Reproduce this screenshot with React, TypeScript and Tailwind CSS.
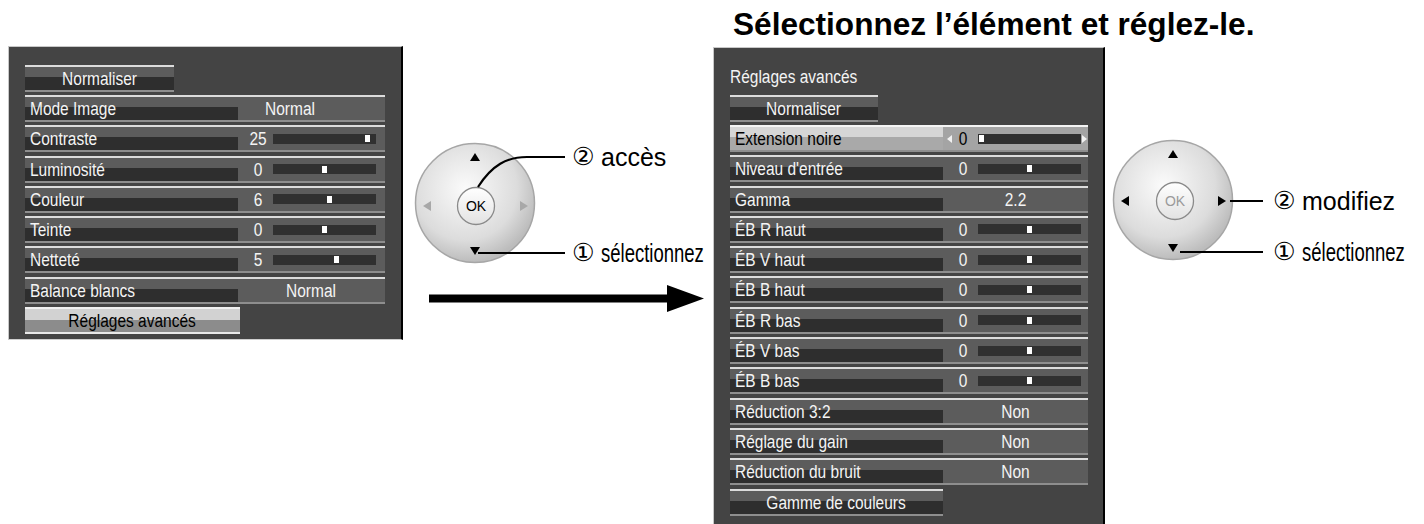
const darkBg =
  "bg-[linear-gradient(to_bottom,#5c5c5c_0%,#5c5c5c_42%,#2e2e2e_42%,#2e2e2e_100%)]";
const lightBg =
  "bg-[linear-gradient(to_bottom,#d6d6d6_0%,#d6d6d6_45%,#a9a9a9_45%,#a9a9a9_100%)]";
const btnLightBg =
  "bg-[linear-gradient(to_bottom,#d2d2d2_0%,#d2d2d2_48%,#8c8c8c_48%,#8c8c8c_100%)]";

type RowData = {
  label: string;
  value: string;
  knob?: number;
  box?: string;
  active?: boolean;
};

const leftRows: RowData[] = [
  { label: "Mode Image", value: "Normal", box: "w-[104px]" },
  { label: "Contraste", value: "25", knob: 92 },
  { label: "Luminosité", value: "0", knob: 49 },
  { label: "Couleur", value: "6", knob: 54 },
  { label: "Teinte", value: "0", knob: 49 },
  { label: "Netteté", value: "5", knob: 61 },
  { label: "Balance blancs", value: "Normal", box: "w-full" },
];

const rightRows: RowData[] = [
  { label: "Extension noire", value: "0", knob: 1, active: true },
  { label: "Niveau d'entrée", value: "0", knob: 49 },
  { label: "Gamma", value: "2.2", box: "w-full" },
  { label: "ÉB R haut", value: "0", knob: 49 },
  { label: "ÉB V haut", value: "0", knob: 49 },
  { label: "ÉB B haut", value: "0", knob: 49 },
  { label: "ÉB R bas", value: "0", knob: 49 },
  { label: "ÉB V bas", value: "0", knob: 49 },
  { label: "ÉB B bas", value: "0", knob: 49 },
  { label: "Réduction 3:2", value: "Non", box: "w-full" },
  { label: "Réglage du gain", value: "Non", box: "w-full" },
  { label: "Réduction du bruit", value: "Non", box: "w-full" },
];

// the OSD font is a narrow sans; squeeze Liberation Sans to match
function Narrow({ children, left }: { children: React.ReactNode; left?: boolean }) {
  return (
    <span
      className={`inline-block translate-y-[1px] whitespace-nowrap scale-x-[0.86] ${
        left ? "origin-left" : "origin-center"
      }`}
    >
      {children}
    </span>
  );
}

function Row({ row }: { row: RowData }) {
  const on = row.active;
  return (
    <div className="flex h-[27px] flex-col">
      <div className={on ? "h-[2px] bg-[#f4f4f4]" : "h-[2px] bg-[#dcdcdc]"} />
      <div className="flex flex-1">
        <div
          className={`w-[213px] shrink-0 pl-[5px] leading-[23px] ${
            on ? lightBg + " text-black" : darkBg + " text-[#f4f4f4]"
          }`}
        >
          <Narrow left>{row.label}</Narrow>
        </div>
        <div
          className={`relative flex flex-1 items-center leading-[23px] ${
            on ? "bg-[#a4a4a4] text-black" : "bg-[#5c5c5c] text-[#f4f4f4]"
          }`}
        >
          {row.knob !== undefined ? (
            <>
              <div className="ml-[7px] w-[26px] text-center">
                <Narrow>{row.value}</Narrow>
              </div>
              <div className="relative ml-[2px] h-[10px] w-[103px] bg-[#303030]">
                <div
                  className="absolute top-[1.5px] h-[7px] w-[5px] bg-white"
                  style={{ left: row.knob }}
                />
              </div>
            </>
          ) : (
            <div className={`${row.box} text-center`}>
              <Narrow>{row.value}</Narrow>
            </div>
          )}
          {on && (
            <>
              <svg className="absolute left-[4px] top-[8px]" width="5" height="8">
                <polygon points="5,0 0,4 5,8" fill="#f2f2f2" />
              </svg>
              <svg className="absolute right-[1px] top-[8px]" width="5" height="8">
                <polygon points="0,0 5,4 0,8" fill="#f2f2f2" />
              </svg>
            </>
          )}
        </div>
      </div>
      <div className="h-[2px] bg-[#8e8e8e]" />
    </div>
  );
}

function Button({ label, width, light }: { label: string; width: string; light?: boolean }) {
  return (
    <div className={`flex h-[27px] flex-col ${width}`}>
      <div className={light ? "h-[2px] bg-[#f0f0f0]" : "h-[2px] bg-[#dcdcdc]"} />
      <div
        className={`flex-1 text-center leading-[23px] ${
          light ? btnLightBg + " text-black" : darkBg + " text-[#f4f4f4]"
        }`}
      >
        <Narrow>{label}</Narrow>
      </div>
      <div className={light ? "h-[2px] bg-[#e8e8e8]" : "h-[2px] bg-[#8e8e8e]"} />
    </div>
  );
}

function Remote({ side }: { side: "left" | "right" }) {
  const left = side === "left";
  const cx = 63;
  const cy = left ? 65 : 62;
  const ok = left ? { x: 64, y: 68 } : { x: 65, y: 63 };
  const side1 = left ? "#a8a8a8" : "#000";
  const id = left ? "gl" : "gr";
  return (
    <svg className="shrink-0" width="156" height="130" viewBox="0 0 156 130">
      <defs>
        <radialGradient id={id} cx="42%" cy="38%" r="62%">
          <stop offset="0%" stopColor="#fbfbfb" />
          <stop offset="70%" stopColor="#dcdcdc" />
          <stop offset="100%" stopColor="#bcbcbc" />
        </radialGradient>
        <linearGradient id={id + "ok"} x1="0" y1="0" x2="0" y2="1">
          <stop offset="0%" stopColor="#ffffff" />
          <stop offset="100%" stopColor="#e2e2e2" />
        </linearGradient>
      </defs>
      <circle cx={cx} cy={cy} r="59.5" fill={`url(#${id})`} stroke="#a6a6a6" strokeWidth="1.5" />
      <circle cx={ok.x} cy={ok.y} r="18.5" fill={`url(#${id}ok)`} stroke="#8a8a8a" strokeWidth="1.3" />
      <text
        x={ok.x}
        y={ok.y + 5}
        textAnchor="middle"
        fontSize="14"
        fontFamily="Liberation Sans, Arial, sans-serif"
        fill={left ? "#000" : "#9a9a9a"}
      >
        OK
      </text>
      <polygon points={`${cx},${cy - 50} ${cx + 5},${cy - 42} ${cx - 5},${cy - 42}`} fill="#000" />
      <polygon points={`${cx},${cy + 52} ${cx + 5},${cy + 44} ${cx - 5},${cy + 44}`} fill="#000" />
      <polygon
        points={`${cx - 52},${ok.y} ${cx - 44},${ok.y - 5} ${cx - 44},${ok.y + 5}`}
        fill={side1}
      />
      <polygon
        points={`${cx + 53},${ok.y} ${cx + 45},${ok.y - 5} ${cx + 45},${ok.y + 5}`}
        fill={side1}
      />
      {left ? (
        <>
          <path d="M66 49 C 80 27, 95 19, 115 19 L 153 19" fill="none" stroke="#000" strokeWidth="2.2" />
          <line x1="66" y1="115" x2="153" y2="115" stroke="#000" strokeWidth="2.2" />
        </>
      ) : (
        <>
          <line x1="120" y1="63" x2="153" y2="63" stroke="#000" strokeWidth="2.2" />
          <line x1="70" y1="114" x2="153" y2="114" stroke="#000" strokeWidth="2.2" />
        </>
      )}
    </svg>
  );
}

function Callout({ n, word, narrow }: { n: string; word: string; narrow?: boolean }) {
  return (
    <div className="flex h-[28px] items-center whitespace-nowrap text-[25px] leading-[28px] text-black">
      <span className="w-[29px] shrink-0 font-['DejaVu_Sans',sans-serif] text-[25px]">{n}</span>
      <span
        className={
          narrow ? "inline-block origin-left scale-x-[0.74]" : "inline-block"
        }
      >
        {word}
      </span>
    </div>
  );
}

export default function App() {
  return (
    <div className="flex h-[524px] w-[1424px] items-start overflow-hidden bg-white font-['Liberation_Sans',Arial,sans-serif] text-[18px]">
      {/* left menu */}
      <div className="ml-[8px] mt-[46px] h-[294px] w-[395px] shrink-0 border-b border-l border-t border-b-[#cfcfcf] border-l-[#c8c8c8] border-t-[#c8c8c8] border-r-2 border-r-black bg-[#444444] pl-[16px] pt-[18px]">
        <div className="mb-[3px]">
          <Button label="Normaliser" width="w-[149px]" />
        </div>
        <div className="flex w-[360px] flex-col gap-[3.3px]">
          {leftRows.map((r) => (
            <Row key={r.label} row={r} />
          ))}
          <Button label="Réglages avancés" width="w-[215px]" light />
        </div>
      </div>

      {/* middle: remote + arrow */}
      <div className="flex w-[310px] shrink-0 flex-col">
        <div className="ml-[9px] mt-[138px] flex">
          <Remote side="left" />
          <div className="ml-[4px] flex shrink-0 flex-col">
            <div className="mt-[5px]">
              <Callout n="②" word="accès" />
            </div>
            <div className="mt-[68px]">
              <Callout n="①" word="sélectionnez" narrow />
            </div>
          </div>
        </div>
        <svg className="ml-[26px] mt-[17px] shrink-0" width="276" height="28" viewBox="0 0 276 28">
          <rect x="0" y="9.5" width="240" height="8" fill="#000" />
          <polygon points="238,0 275,13.5 238,27" fill="#000" />
        </svg>
      </div>

      {/* right: advanced settings */}
      <div className="flex flex-col">
        <div className="ml-[20px] h-[47px] pt-[5px] text-[31.6px] font-bold leading-[38px] text-black">
          Sélectionnez l’élément et réglez-le.
        </div>
        <div className="flex items-start">
          <div className="h-[490px] w-[392px] shrink-0 border-l border-t border-l-[#c8c8c8] border-t-[#c8c8c8] border-r-2 border-r-black bg-[#444444] pl-[16px] pt-[18px]">
            <div className="mb-[9px] leading-[20px] text-[#f4f4f4]">
              <Narrow left>Réglages avancés</Narrow>
            </div>
            <div className="mb-[3px]">
              <Button label="Normaliser" width="w-[148px]" />
            </div>
            <div className="flex w-[358px] flex-col gap-[3.3px]">
              {rightRows.map((r) => (
                <Row key={r.label} row={r} />
              ))}
              <Button label="Gamme de couleurs" width="w-[213px]" />
            </div>
          </div>
          <div className="ml-[5px] mt-[91px] flex shrink-0">
            <Remote side="right" />
            <div className="ml-[7px] flex shrink-0 flex-col">
              <div className="mt-[49px]">
                <Callout n="②" word="modifiez" />
              </div>
              <div className="mt-[23px]">
                <Callout n="①" word="sélectionnez" narrow />
              </div>
            </div>
          </div>
        </div>
      </div>
    </div>
  );
}
